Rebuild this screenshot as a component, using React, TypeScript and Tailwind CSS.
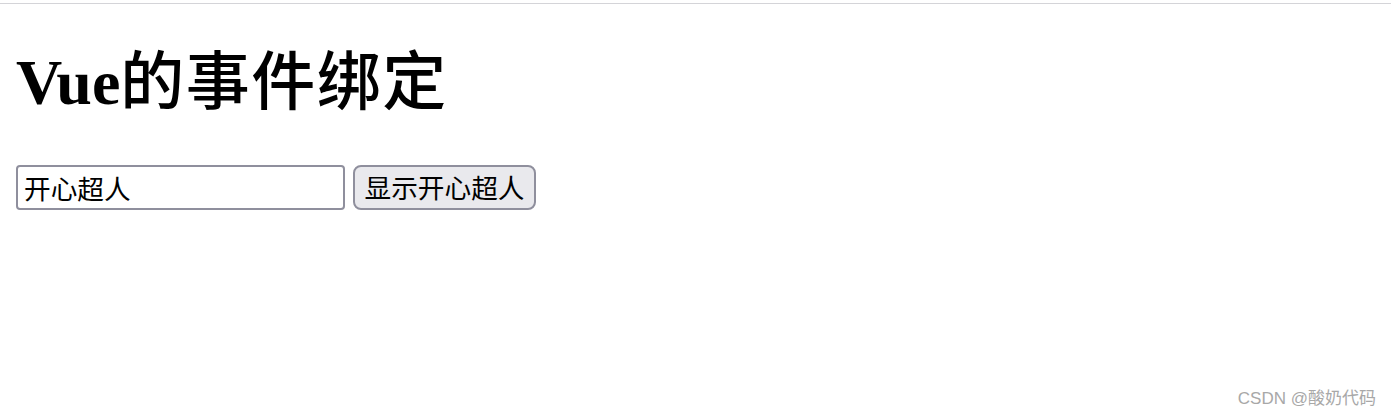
export default function App() {
  return (
    <div className="relative h-[416px] w-full overflow-hidden bg-white">
      <div className="h-[4px] border-b border-[#d4d4d8]" />
      <div className="px-[16px]">
        <h1 className="mt-[43px] h-[71px] font-['Liberation_Serif','Noto_Sans_CJK_SC',serif] text-[64px] font-bold leading-[71px] text-black">
          Vue<span className="font-medium tracking-[1.5px]">的事件绑定</span>
        </h1>
        <div className="mt-[47px] flex items-center gap-[8px]">
          <input
            defaultValue="开心超人"
            className="h-[45px] w-[329px] rounded-[4px] border-2 border-[#8f8f9d] bg-white px-[6px] font-['Noto_Sans_CJK_SC',sans-serif] text-[26.67px] leading-none text-black outline-none"
          />
          <button className="h-[45px] w-[183px] rounded-[8px] border-2 border-[#8f8f9d] bg-[#e9e9ed] px-0 font-['Noto_Sans_CJK_SC',sans-serif] text-[26.67px] leading-none text-black">
            显示开心超人
          </button>
        </div>
      </div>
      <div className="absolute bottom-[9px] right-[15px] font-['Liberation_Sans','Noto_Sans_CJK_SC',sans-serif] text-[17px] leading-none text-[#a8a8a8]">
        CSDN @酸奶代码
      </div>
    </div>
  );
}
